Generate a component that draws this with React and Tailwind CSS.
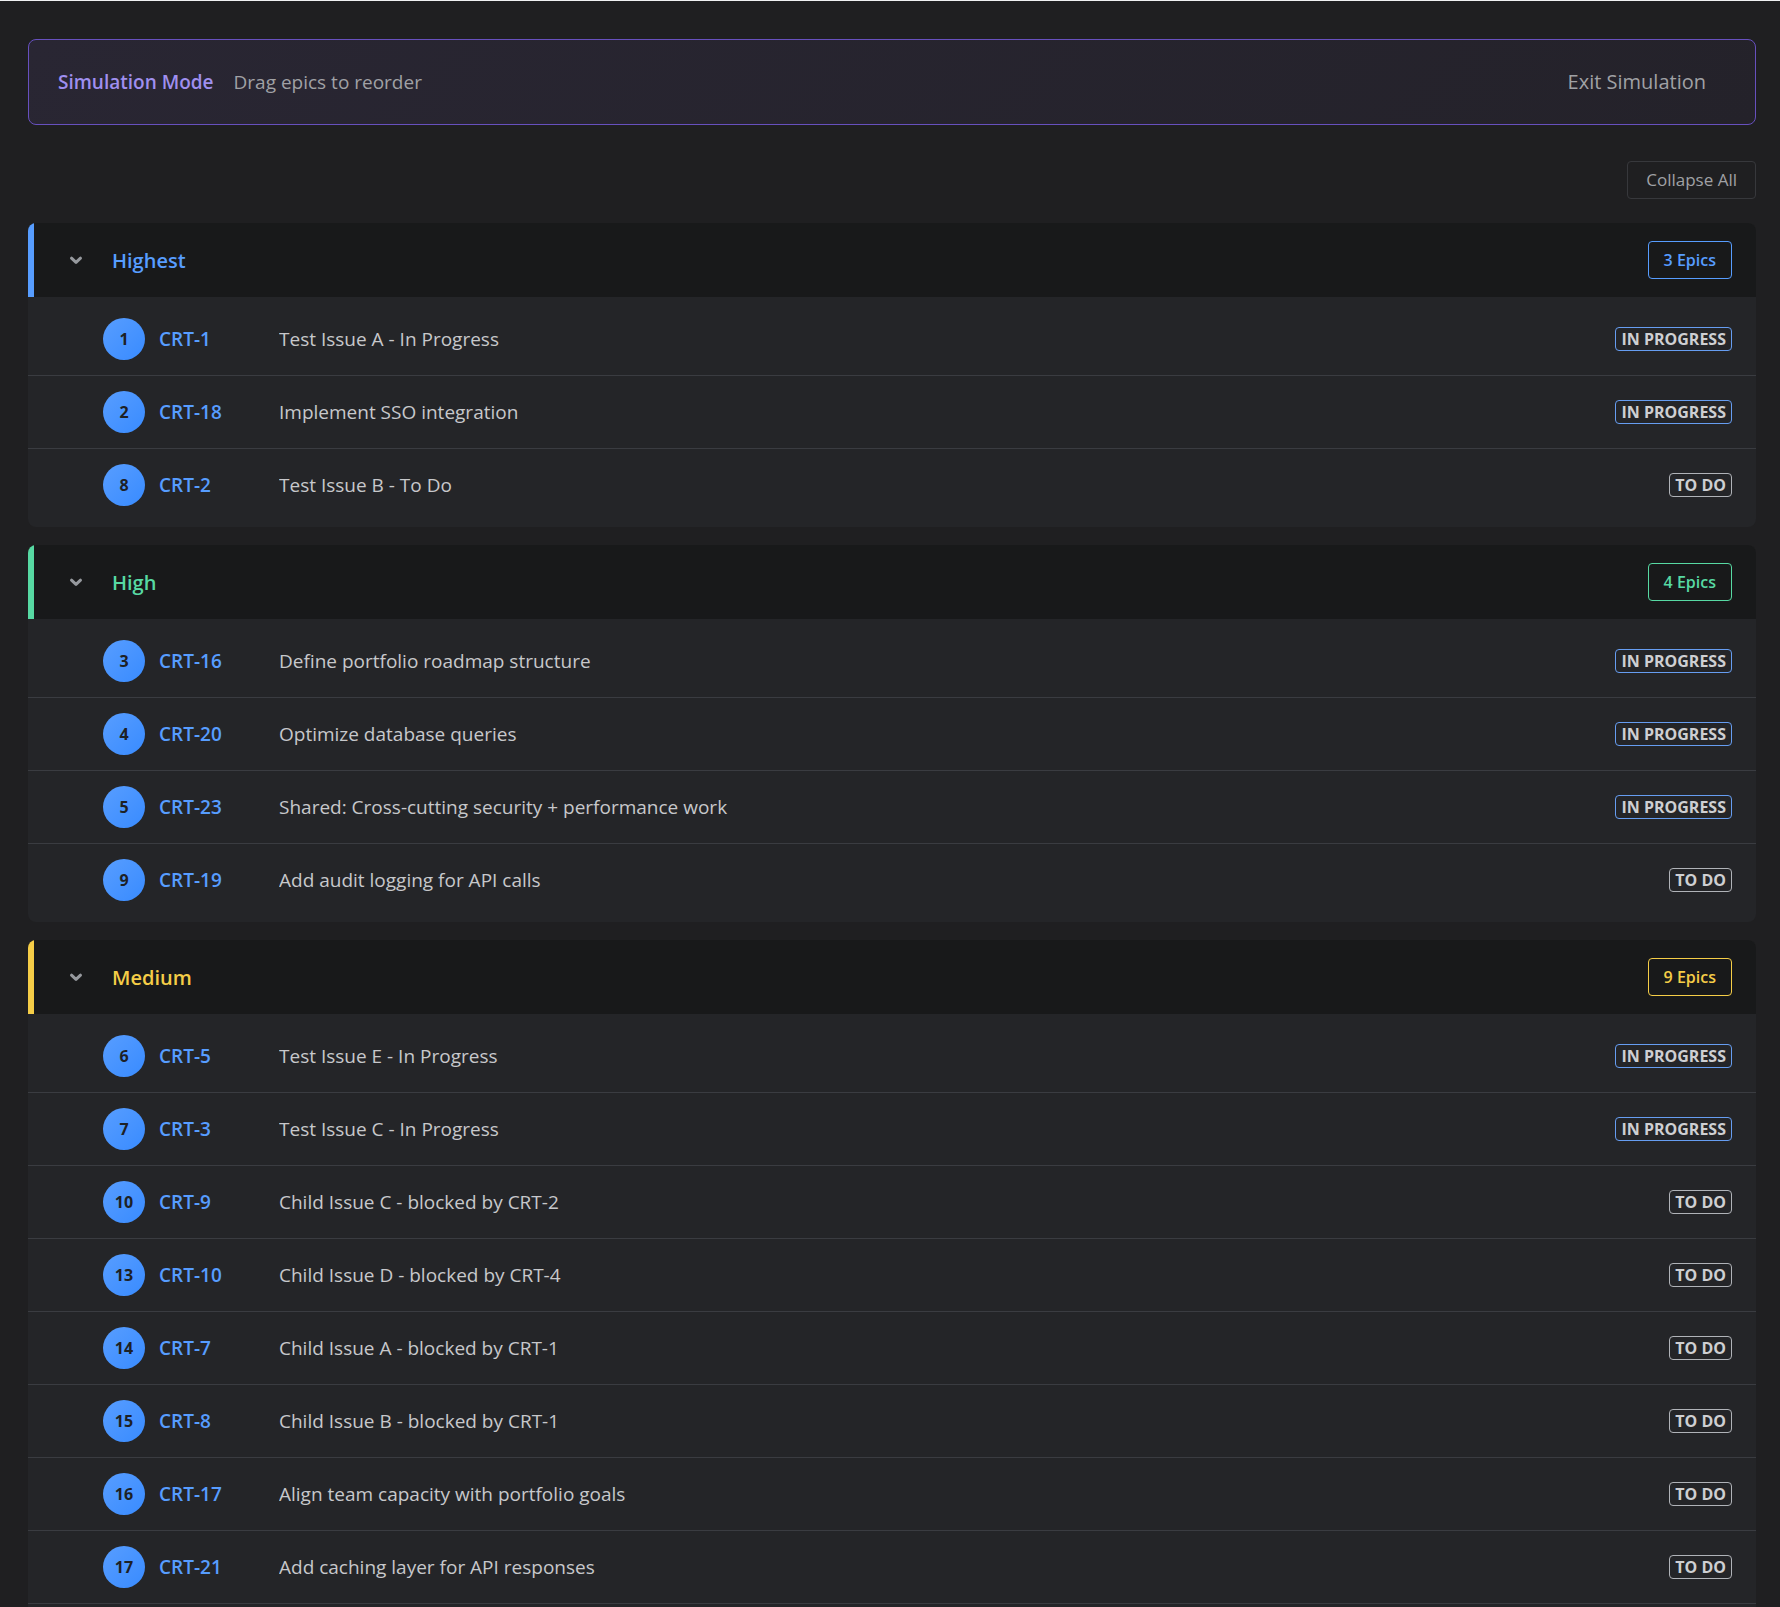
import { useState } from 'react';

const GROUPS = [
    {
        name: 'Highest',
        count: 3,
        text: 'text-[#579dff]',
        border: 'border-[#579dff]',
        epics: [
            { rank: 1, key: 'CRT-1', title: 'Test Issue A - In Progress', status: 'In Progress' },
            { rank: 2, key: 'CRT-18', title: 'Implement SSO integration', status: 'In Progress' },
            { rank: 8, key: 'CRT-2', title: 'Test Issue B - To Do', status: 'To Do' },
        ],
    },
    {
        name: 'High',
        count: 4,
        text: 'text-[#57d9a3]',
        border: 'border-[#57d9a3]',
        epics: [
            { rank: 3, key: 'CRT-16', title: 'Define portfolio roadmap structure', status: 'In Progress' },
            { rank: 4, key: 'CRT-20', title: 'Optimize database queries', status: 'In Progress' },
            { rank: 5, key: 'CRT-23', title: 'Shared: Cross-cutting security + performance work', status: 'In Progress' },
            { rank: 9, key: 'CRT-19', title: 'Add audit logging for API calls', status: 'To Do' },
        ],
    },
    {
        name: 'Medium',
        count: 9,
        text: 'text-[#f5cd47]',
        border: 'border-[#f5cd47]',
        epics: [
            { rank: 6, key: 'CRT-5', title: 'Test Issue E - In Progress', status: 'In Progress' },
            { rank: 7, key: 'CRT-3', title: 'Test Issue C - In Progress', status: 'In Progress' },
            { rank: 10, key: 'CRT-9', title: 'Child Issue C - blocked by CRT-2', status: 'To Do' },
            { rank: 13, key: 'CRT-10', title: 'Child Issue D - blocked by CRT-4', status: 'To Do' },
            { rank: 14, key: 'CRT-7', title: 'Child Issue A - blocked by CRT-1', status: 'To Do' },
            { rank: 15, key: 'CRT-8', title: 'Child Issue B - blocked by CRT-1', status: 'To Do' },
            { rank: 16, key: 'CRT-17', title: 'Align team capacity with portfolio goals', status: 'To Do' },
            { rank: 17, key: 'CRT-21', title: 'Add caching layer for API responses', status: 'To Do' },
        ],
    },
];

function StatusBadge({ status }) {
    const border = status === 'In Progress' ? 'border-[#669df1]' : 'border-[#b0b3b8]';
    return (
        <span className={`h-6 px-[5px] flex items-center rounded border text-base font-bold uppercase text-[#cecfd2] ${border}`}>
            {status}
        </span>
    );
}

function EpicRow({ epic }) {
    return (
        <li className="flex items-center h-[73px] pl-[75px] pr-6 border-b border-[#3a3c41] last:h-[72px] last:border-b-0">
            <span className="w-[42px] h-[42px] mr-3.5 flex items-center justify-center rounded-full bg-linear-135 from-[#579dff] to-[#388bff] text-base font-bold text-[#1d2125]">
                {epic.rank}
            </span>
            <a href={`#${epic.key}`} className="w-[120px] text-[19px] font-semibold text-[#579dff]">{epic.key}</a>
            <span className="flex-1 truncate text-[19px] text-[#c7c8cb]">{epic.title}</span>
            <StatusBadge status={epic.status} />
        </li>
    );
}

function PriorityGroup({ group, open, onToggle }) {
    return (
        <section className="rounded-lg overflow-hidden bg-[#242528]">
            <div className={`flex items-center h-[74px] pl-[30px] pr-6 border-l-[6px] bg-[#18191a] ${group.border}`}>
                <button
                    type="button"
                    onClick={onToggle}
                    aria-expanded={open}
                    aria-label={`Toggle ${group.name}`}
                    className="w-6 h-6 mr-6 flex items-center justify-center text-[#96999e]"
                >
                    <svg viewBox="0 0 24 24" className={`w-6 h-6 ${open ? '' : '-rotate-90'}`} fill="none" stroke="currentColor" strokeWidth="3" strokeLinecap="round" strokeLinejoin="round">
                        <path d="M7.5 10.2 12 14.4l4.5-4.2" />
                    </svg>
                </button>
                <h2 className={`flex-1 pt-0.5 text-xl font-semibold ${group.text}`}>{group.name}</h2>
                <span className={`h-[38px] px-[15px] flex items-center rounded border text-base font-semibold ${group.text} ${group.border}`}>
                    {group.count} Epics
                </span>
            </div>
            {open && (
                <ul className="py-1.5">
                    {group.epics.map((epic) => (
                        <EpicRow key={epic.key} epic={epic} />
                    ))}
                    {/* space for rows that are not loaded yet */}
                    {group.epics.length < group.count && <li className="h-[72px]" />}
                </ul>
            )}
        </section>
    );
}

export default function App() {
    const [collapsed, setCollapsed] = useState([]);

    const toggle = (name) => {
        setCollapsed((prev) => (prev.includes(name) ? prev.filter((n) => n !== name) : [...prev, name]));
    };

    return (
        <div className="h-screen overflow-hidden border-t border-[#f0f1f2] bg-[#1f1f21] pt-[38px] pl-7 pr-6 font-['Open_Sans',sans-serif]">
            <header className="flex items-center h-[86px] pl-[29px] pr-[49px] rounded-lg border border-[#6750be] bg-linear-135 from-[#292633] to-[#24222a]">
                <strong className="text-[19px] font-semibold text-[#9f8fef]">Simulation Mode</strong>
                <span className="ml-5 flex-1 text-[19px] text-[#a0a1a5]">Drag epics to reorder</span>
                <button type="button" className="text-xl text-[#a0a1a5]">Exit Simulation</button>
            </header>

            <div className="flex justify-end mt-9 mb-6">
                <button
                    type="button"
                    onClick={() => setCollapsed(GROUPS.map((g) => g.name))}
                    className="h-[38px] px-[18px] rounded border border-[#37383c] text-[17px] text-[#a0a1a5]"
                >
                    Collapse All
                </button>
            </div>

            <main className="flex flex-col gap-[18px]">
                {GROUPS.map((group) => (
                    <PriorityGroup
                        key={group.name}
                        group={group}
                        open={!collapsed.includes(group.name)}
                        onToggle={() => toggle(group.name)}
                    />
                ))}
            </main>
        </div>
    );
}
